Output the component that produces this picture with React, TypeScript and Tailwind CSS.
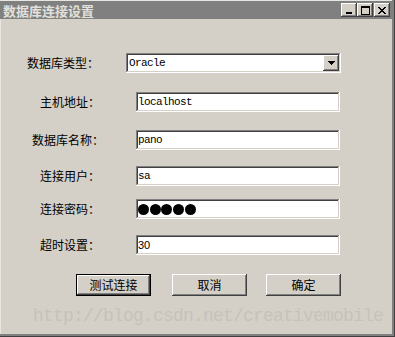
import React from 'react';

const cjk = { fontFamily: '"Noto Sans CJK SC", "Noto Sans", sans-serif' };

const raised =
  'bg-[#d4d0c8] shadow-[inset_-1px_-1px_#404040,inset_1px_1px_#ffffff,inset_-2px_-2px_#808080,inset_2px_2px_#d4d0c8]';
const sunken =
  'bg-white shadow-[inset_-1px_-1px_#ffffff,inset_1px_1px_#808080,inset_-2px_-2px_#d4d0c8,inset_2px_2px_#404040]';

const CaptionButton = ({ kind }: { kind: 'min' | 'max' | 'close' }) => (
  <div className={`w-[16px] h-[14px] flex items-center justify-center ${raised}`}>
    <svg width="10" height="9" viewBox="0 0 10 9" shapeRendering="crispEdges">
      {kind === 'min' && <rect x="2" y="6" width="6" height="2" fill="#000" />}
      {kind === 'max' && (
        <path d="M1 0h9v2H1zM1 2h1v7H1zM9 2h1v7H9zM1 8h9v1H1z" fill="#000" />
      )}
      {kind === 'close' && (
        <path
          d="M1 1h2v1h1v1h2V2h1V1h2v1H8v1H7v1H6v1h1v1h1v1h1v1H7V7H6V6H4v1H3v1H1V7h1V6h1V5h1V4H3V3H2V2H1z"
          fill="#000"
        />
      )}
    </svg>
  </div>
);

const Row = ({
  top,
  labelBox,
  pad,
  label,
  children,
}: {
  top: string;
  labelBox: string;
  pad: string;
  label: string;
  children: React.ReactNode;
}) => (
  <div className={`flex items-center ${top}`}>
    <div className={`${labelBox} ${pad} text-[12px] leading-none text-black`} style={cjk}>
      {label}
    </div>
    {children}
  </div>
);

const Field = ({ children }: { children: React.ReactNode }) => (
  <div className={`w-[204px] h-[20px] flex items-center pl-[2px] ${sunken}`}>{children}</div>
);

const mono = 'text-[11px] tracking-[-0.6px] text-black font-["Liberation_Mono",monospace]';

export default function App() {
  return (
    <div className="w-[395px] h-[337px] bg-[#d4d0c8] flex flex-col overflow-hidden shadow-[inset_-1px_-1px_#404040,inset_-3px_-3px_#808080,inset_1px_1px_#e8e6e0]">
      <div className="mt-[1px] ml-[0px] mr-[3px] h-[18px] bg-[#808080] flex items-center pl-[3px] pr-[2px]">
        <span className="text-[13px] font-bold leading-none text-[#e2e0da]" style={cjk}>
          数据库连接设置
        </span>
        <div className="ml-auto flex items-center gap-[0px]">
          <CaptionButton kind="min" />
          <CaptionButton kind="max" />
          <div className="ml-[1px]">
            <CaptionButton kind="close" />
          </div>
        </div>
      </div>

      <Row top="mt-[34px]" labelBox="w-[126px]" pad="pl-[27px]" label="数据库类型：">
        <div className={`w-[215px] h-[20px] flex items-center pl-[3px] pr-[2px] ${sunken}`}>
          <span className={mono}>Oracle</span>
          <div className={`ml-auto w-[16px] h-[16px] flex items-center justify-center ${raised}`}>
            <svg width="7" height="4" viewBox="0 0 7 4" shapeRendering="crispEdges">
              <path d="M0 0h7v1H0zM1 1h5v1H1zM2 2h3v1H2zM3 3h1v1H3z" fill="#000" />
            </svg>
          </div>
        </div>
      </Row>

      <Row top="mt-[19px]" labelBox="w-[136px]" pad="pl-[40px]" label="主机地址：">
        <Field>
          <span className={mono}>localhost</span>
        </Field>
      </Row>

      <Row top="mt-[18px]" labelBox="w-[136px]" pad="pl-[32px]" label="数据库名称：">
        <Field>
          <span className={mono}>pano</span>
        </Field>
      </Row>

      <Row top="mt-[16px]" labelBox="w-[136px]" pad="pl-[40px]" label="连接用户：">
        <Field>
          <span className={mono}>sa</span>
        </Field>
      </Row>

      <Row top="mt-[13px]" labelBox="w-[136px]" pad="pl-[40px]" label="连接密码：">
        <Field>
          <div className="flex items-center gap-[0.7px]">
            {[0, 1, 2, 3, 4].map((i) => (
              <div key={i} className="w-[11px] h-[11px] rounded-full bg-black" />
            ))}
          </div>
        </Field>
      </Row>

      <Row top="mt-[16px]" labelBox="w-[136px]" pad="pl-[40px]" label="超时设置：">
        <Field>
          <span className='text-[11px] text-black font-["Liberation_Sans",Arial,sans-serif]'>30</span>
        </Field>
      </Row>

      <div className="mt-[19px] flex items-center">
        <button
          className={`ml-[76px] w-[75px] h-[22px] border border-black flex items-center justify-center ${raised}`}
        >
          <span className="text-[12px] leading-none text-black" style={cjk}>测试连接</span>
        </button>
        <button className={`ml-[21px] w-[75px] h-[22px] flex items-center justify-center ${raised}`}>
          <span className="text-[12px] leading-none text-black" style={cjk}>取消</span>
        </button>
        <button className={`ml-[19px] w-[75px] h-[22px] flex items-center justify-center ${raised}`}>
          <span className="text-[12px] leading-none text-black" style={cjk}>确定</span>
        </button>
      </div>

      <div className='mt-[9px] ml-[33px] text-[18px] leading-[22px] tracking-[-0.8px] text-[#c6c2ba] font-["Liberation_Mono",monospace] whitespace-nowrap'>
        http://blog.csdn.net/creativemobile
      </div>
    </div>
  );
}
